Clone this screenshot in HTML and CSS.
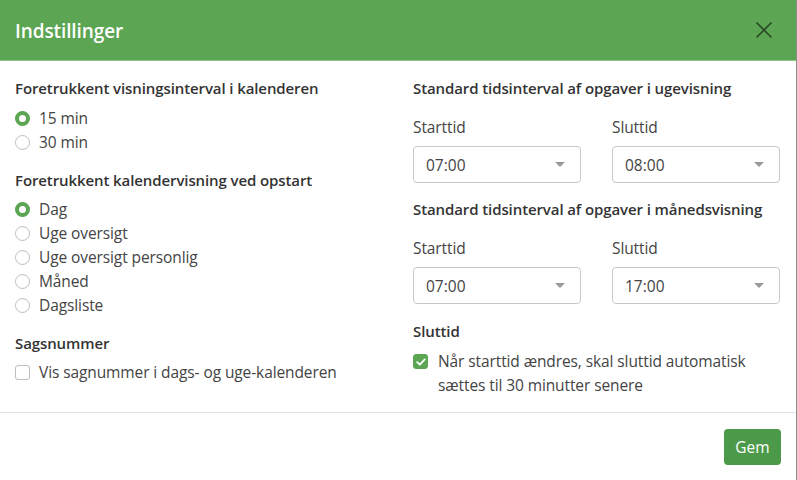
FILE: index.html
```html
<!DOCTYPE html>
<html lang="da">
<head>
<meta charset="utf-8">
<title>Indstillinger</title>
<link rel="stylesheet" href="styles.css">
</head>
<body>
<div class="modal">
  <header class="modal-header">
    <h1 class="modal-title">Indstillinger</h1>
    <button class="close" aria-label="Luk">
      <svg width="18" height="18" viewBox="0 0 18 18"><path d="M1.5 1.5 L16.5 16.5 M16.5 1.5 L1.5 16.5" stroke="currentColor" stroke-width="1.6" fill="none"/></svg>
    </button>
  </header>
  <main class="modal-body">
    <section class="col">
      <h2 class="heading">Foretrukkent visningsinterval i kalenderen</h2>
      <ul class="options">
        <li class="option"><span class="radio checked"></span>15 min</li>
        <li class="option"><span class="radio"></span>30 min</li>
      </ul>
      <h2 class="heading">Foretrukkent kalendervisning ved opstart</h2>
      <ul class="options">
        <li class="option"><span class="radio checked"></span>Dag</li>
        <li class="option"><span class="radio"></span>Uge oversigt</li>
        <li class="option"><span class="radio"></span>Uge oversigt personlig</li>
        <li class="option"><span class="radio"></span>Måned</li>
        <li class="option"><span class="radio"></span>Dagsliste</li>
      </ul>
      <h2 class="heading heading-gap">Sagsnummer</h2>
      <ul class="options">
        <li class="option"><span class="check"></span>Vis sagnummer i dags- og uge-kalenderen</li>
      </ul>
    </section>
    <section class="col">
      <h2 class="heading">Standard tidsinterval af opgaver i ugevisning</h2>
      <div class="pair">
        <div class="field">
          <div class="label">Starttid</div>
          <div class="select"><span>07:00</span><span class="caret"></span></div>
        </div>
        <div class="field">
          <div class="label">Sluttid</div>
          <div class="select"><span>08:00</span><span class="caret"></span></div>
        </div>
      </div>
      <h2 class="heading">Standard tidsinterval af opgaver i månedsvisning</h2>
      <div class="pair">
        <div class="field">
          <div class="label">Starttid</div>
          <div class="select"><span>07:00</span><span class="caret"></span></div>
        </div>
        <div class="field">
          <div class="label">Sluttid</div>
          <div class="select"><span>17:00</span><span class="caret"></span></div>
        </div>
      </div>
      <h2 class="heading">Sluttid</h2>
      <div class="option multi"><span class="check checked">
        <svg width="10" height="8" viewBox="0 0 10 8"><path d="M1.2 4.2 L3.8 6.6 L8.8 1.4" stroke="#fff" stroke-width="1.8" fill="none" stroke-linecap="round" stroke-linejoin="round"/></svg>
      </span><span>Når starttid ændres, skal sluttid automatisk sættes til 30 minutter senere</span></div>
    </section>
  </main>
  <footer class="modal-footer">
    <button class="btn">Gem</button>
  </footer>
</div>
</body>
</html>
```
FILE: styles.css
```css
* { box-sizing: border-box; }
html, body { margin: 0; padding: 0; }
body {
  background: #8c8c8c;
  font-family: "Open Sans", "Noto Sans", sans-serif;
  color: #333;
  width: 797px;
  height: 480px;
  overflow: hidden;
}
.modal {
  width: 796px;
  height: 480px;
  background: #fff;
  display: flex;
  flex-direction: column;
}
.modal-header {
  height: 61px;
  background: #5ba553;
  border-bottom: 1px solid #8fc489;
  display: flex;
  align-items: center;
  justify-content: space-between;
  padding: 0 15px;
}
.modal-title {
  margin: 0;
  color: #fff;
  font-size: 19px;
  font-weight: 600;
  letter-spacing: -0.1px;
  padding-top: 1px;
}
.close {
  background: none;
  border: 0;
  padding: 0;
  margin-right: 8px;
  color: #2b4a28;
  display: flex;
  cursor: pointer;
}
.modal-body {
  display: grid;
  grid-template-columns: 1fr 1fr;
  column-gap: 30px;
  padding: 16px 15px 0 15px;
  height: 352px;
  border-bottom: 1px solid #dee2e6;
}
.col { display: flex; flex-direction: column; }
.heading {
  margin: 0;
  font-size: 15px;
  font-weight: 600;
  line-height: 22px;
  color: #333;
  letter-spacing: -0.1px;
}
.heading-gap { margin-top: 0; }
.options {
  list-style: none;
  margin: 6px 0 15px 0;
  padding: 0;
}
.col:first-child .options:first-of-type { margin-top: 7px; }
.option {
  display: flex;
  align-items: center;
  height: 24px;
  font-size: 15.5px;
  color: #444;
  letter-spacing: -0.1px;
}
.radio {
  width: 15px;
  height: 15px;
  border-radius: 50%;
  border: 1px solid #b8bec4;
  margin-right: 9px;
  flex: none;
  background: #fff;
}
.radio.checked {
  border: 4px solid #5ba553;
  background: #fff;
}
.check {
  width: 15px;
  height: 15px;
  border-radius: 3px;
  border: 1px solid #b8bec4;
  margin-right: 9px;
  flex: none;
  display: flex;
  align-items: center;
  justify-content: center;
}
.check.checked {
  background: #5ba553;
  border-color: #5ba553;
}
.pair {
  display: grid;
  grid-template-columns: 1fr 1fr;
  column-gap: 31px;
  margin: 17px 0 15px 0;
  margin-right: 1px;
}
.pair + .heading + .pair { margin-bottom: 16px; }
.label {
  font-size: 15.5px;
  color: #444;
  line-height: 22px;
  margin-bottom: 8px;
  letter-spacing: -0.1px;
}
.select {
  height: 37px;
  border: 1px solid #c8c8c8;
  border-radius: 4px;
  display: flex;
  align-items: center;
  justify-content: space-between;
  padding: 0 15px 0 12px;
  font-size: 15.5px;
  color: #444;
}
.caret {
  width: 0;
  height: 0;
  border-left: 5px solid transparent;
  border-right: 5px solid transparent;
  border-top: 5px solid #999;
}
.option.multi {
  align-items: flex-start;
  height: auto;
  line-height: 24px;
  margin-top: 7px;
}
.option.multi .check { margin-top: 5px; margin-right: 10px; }
.modal-footer {
  display: flex;
  justify-content: flex-end;
  padding: 16px 15px 0 15px;
}
.btn {
  background: #4c9a49;
  color: #fff;
  border: 0;
  border-radius: 4px;
  width: 57px;
  height: 36px;
  font-family: inherit;
  font-size: 15.5px;
  padding: 0;
}
```
